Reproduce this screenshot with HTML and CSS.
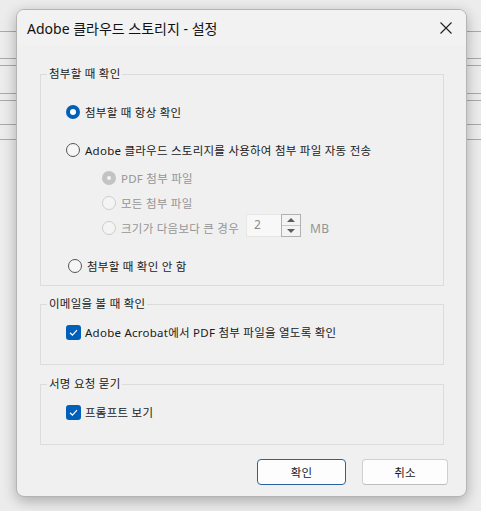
FILE: index.html
```html
<!DOCTYPE html>
<html lang="ko">
<head>
    <meta charset="UTF-8">
    <meta name="viewport" content="width=device-width, initial-scale=1.0">
    <title>Adobe 클라우드 스토리지 - 설정</title>
    <link rel="stylesheet" href="styles.css">
</head>
<body>
    <div class="backdrop">
        <div class="dialog">
            <div class="title-bar">
                <span class="title">Adobe 클라우드 스토리지 - 설정</span>
                <span class="close">
                    <svg width="12" height="12" viewBox="0 0 12 12">
                        <path d="M0.5 0.5 L11.5 11.5 M11.5 0.5 L0.5 11.5" stroke="#1f1f1f" stroke-width="1.1" fill="none"/>
                    </svg>
                </span>
            </div>

            <div class="dialog-body">
                <fieldset class="group">
                    <legend>첨부할 때 확인</legend>
                    <div class="options options-attach">
                        <div class="option">
                            <span class="radio checked"></span>
                            <span>첨부할 때 항상 확인</span>
                        </div>
                        <div class="option row-auto">
                            <span class="radio"></span>
                            <span>Adobe 클라우드 스토리지를 사용하여 첨부 파일 자동 전송</span>
                        </div>
                        <div class="option sub disabled first-sub">
                            <span class="radio checked"></span>
                            <span>PDF 첨부 파일</span>
                        </div>
                        <div class="option sub disabled">
                            <span class="radio"></span>
                            <span>모든 첨부 파일</span>
                        </div>
                        <div class="option sub disabled">
                            <span class="radio"></span>
                            <span>크기가 다음보다 큰 경우</span>
                            <span class="spin">
                                <span class="spin-field">2</span>
                                <span class="spin-buttons">
                                    <span class="spin-up"></span>
                                    <span class="spin-down"></span>
                                </span>
                            </span>
                            <span class="unit">MB</span>
                        </div>
                        <div class="option row-never">
                            <span class="radio"></span>
                            <span>첨부할 때 확인 안 함</span>
                        </div>
                    </div>
                </fieldset>

                <fieldset class="group">
                    <legend>이메일을 볼 때 확인</legend>
                    <div class="options">
                        <div class="option">
                            <span class="checkbox">
                                <svg width="15" height="15" viewBox="0 0 15 15">
                                    <path d="M4 7.8 L6.4 10.1 L11 5.2" stroke="#fff" stroke-width="1.2" fill="none"/>
                                </svg>
                            </span>
                            <span>Adobe Acrobat에서 PDF 첨부 파일을 열도록 확인</span>
                        </div>
                    </div>
                </fieldset>

                <fieldset class="group">
                    <legend>서명 요청 묻기</legend>
                    <div class="options">
                        <div class="option">
                            <span class="checkbox">
                                <svg width="15" height="15" viewBox="0 0 15 15">
                                    <path d="M4 7.8 L6.4 10.1 L11 5.2" stroke="#fff" stroke-width="1.2" fill="none"/>
                                </svg>
                            </span>
                            <span>프롬프트 보기</span>
                        </div>
                    </div>
                </fieldset>
            </div>

            <div class="dialog-footer">
                <button class="btn btn-default">확인</button>
                <button class="btn btn-cancel">취소</button>
            </div>
        </div>
    </div>
</body>
</html>
```

FILE: styles.css
```css
body, html {
    margin: 0;
    background-color: #ffffff;
    font-family: "Noto Sans", "Noto Sans CJK KR", sans-serif;
    font-size: 11.5px;
    letter-spacing: 0.25px;
    color: #1a1a1a;
}

/* window behind the dialog, with its grid lines */
.backdrop {
    width: 481px;
    height: 511px;
    box-sizing: border-box;
    padding: 9px 0 0 16px;
    background:
        linear-gradient(#a9a9a9, #a9a9a9) 0 31px / 100% 1px no-repeat,
        linear-gradient(#a9a9a9, #a9a9a9) 0 58px / 100% 1px no-repeat,
        linear-gradient(#a9a9a9, #a9a9a9) 0 65px / 100% 1px no-repeat,
        linear-gradient(#a9a9a9, #a9a9a9) 0 93px / 100% 1px no-repeat,
        linear-gradient(#a9a9a9, #a9a9a9) 0 100px / 100% 1px no-repeat,
        linear-gradient(#a9a9a9, #a9a9a9) 0 124px / 100% 1px no-repeat,
        linear-gradient(#a9a9a9, #a9a9a9) 0 139px / 100% 1px no-repeat,
        #ececec;
}

.dialog {
    width: 451px;
    box-sizing: border-box;
    border: 1px solid #b4b4b4;
    border-radius: 8px;
    background-color: #f0f0f0;
    box-shadow: 0 4px 14px rgba(0, 0, 0, 0.28);
    overflow: hidden;
}

.title-bar {
    height: 35px;
    display: flex;
    align-items: center;
    padding-left: 10px;
    background-color: #f2f2f2;
}
.title {
    flex-grow: 1;
    font-size: 14px;
    letter-spacing: 0;
    color: #111;
}
.close {
    width: 40px;
    height: 35px;
    display: flex;
    align-items: center;
    justify-content: center;
}

.dialog-body {
    padding: 21px 22px 0 23px;
}

.group {
    margin: 0;
    padding: 0;
    border: 1px solid #dcdcdc;
}
.group + .group {
    margin-top: 10px;
}
.group:last-child {
    margin-top: 11px;
}
.group legend {
    margin-left: 6px;
    padding: 0 2px;
    line-height: 16px;
    color: #1a1a1a;
}

.options {
    display: flex;
    flex-direction: column;
    padding: 10px 0 22px 25px;
}
.options-attach {
    padding-top: 20px;
    padding-bottom: 9px;
}

.option {
    display: flex;
    align-items: center;
    height: 20px;
    gap: 5px;
}
.option.sub {
    padding-left: 36px;
    margin-top: 5px;
}
.option.first-sub {
    margin-top: 8px;
}
.row-auto {
    margin-top: 18px;
}
.row-never {
    margin-top: 18px;
    margin-left: 2px;
}
.disabled {
    color: #959595;
}

/* radio buttons */
.radio {
    width: 14px;
    height: 14px;
    box-sizing: border-box;
    border-radius: 50%;
    border: 1px solid #555;
    background-color: #f6f6f6;
    flex-shrink: 0;
}
.radio.checked {
    border: 4px solid #005fb8;
    background-color: #ffffff;
}
.disabled .radio {
    border-color: #cdcdcd;
    background-color: #f4f4f4;
}
.disabled .radio.checked {
    border: 5px solid #c3c3c3;
    background-color: #f4f4f4;
}

/* checkboxes */
.checkbox {
    width: 15px;
    height: 15px;
    border-radius: 3px;
    background-color: #005fb8;
    display: flex;
    flex-shrink: 0;
    margin-right: -1px;
}

/* size spinner */
.spin {
    display: flex;
    margin-left: 2px;
    margin-bottom: 5px;
}
.spin-field {
    width: 35px;
    height: 23px;
    box-sizing: border-box;
    padding-left: 7px;
    border: 1px solid #e6e6e6;
    border-right: none;
    background-color: #f8f8f8;
    font-size: 12px;
    line-height: 19px;
    color: #8c8c8c;
}
.spin-buttons {
    width: 20px;
    height: 23px;
    box-sizing: border-box;
    border: 1px solid #b1b1b1;
    background-color: #f3f3f3;
    display: flex;
    flex-direction: column;
}
.spin-up, .spin-down {
    flex: 1;
    display: flex;
    align-items: center;
    justify-content: center;
}
.spin-up {
    border-bottom: 1px solid #c9c9c9;
}
.spin-up::after {
    content: "";
    border-left: 4px solid transparent;
    border-right: 4px solid transparent;
    border-bottom: 4px solid #5c5c5c;
}
.spin-down::after {
    content: "";
    border-left: 4px solid transparent;
    border-right: 4px solid transparent;
    border-top: 4px solid #5c5c5c;
}
.unit {
    margin-left: 4px;
    font-size: 12px;
}

.dialog-footer {
    display: flex;
    justify-content: flex-end;
    gap: 16px;
    padding: 14px 18px 11px 0;
}
.btn {
    height: 26px;
    border: 1px solid #d0d0d0;
    border-bottom-color: #bdbdbd;
    border-radius: 4px;
    background-color: #fdfdfd;
    font-family: inherit;
    font-size: 11.5px;
    letter-spacing: 0.25px;
    color: #1a1a1a;
    padding: 0;
}
.btn-default {
    width: 89px;
    border: 1px solid #2a62a0;
}
.btn-cancel {
    width: 86px;
}
```
